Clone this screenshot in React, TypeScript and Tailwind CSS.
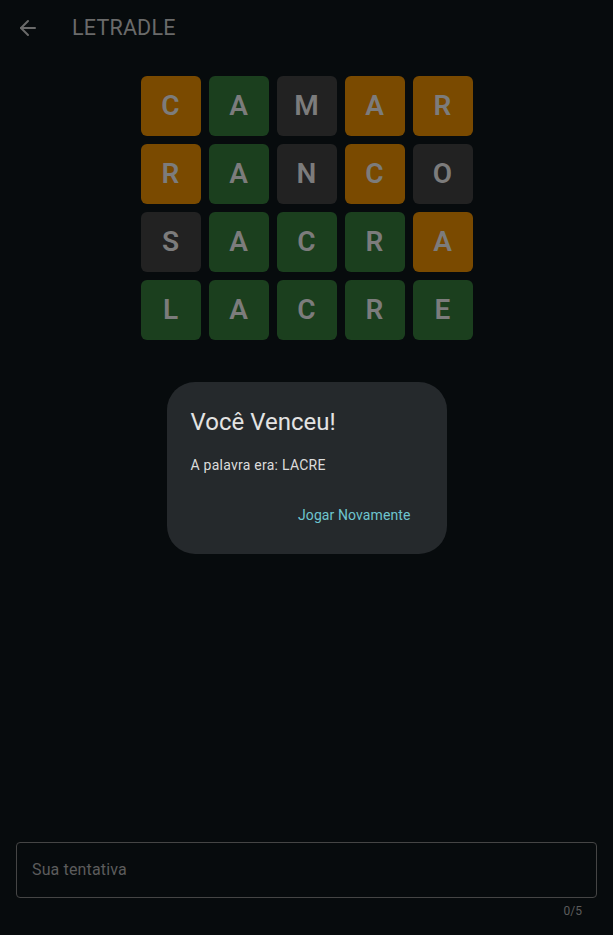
import { ArrowLeft } from 'lucide-react'

type Tile = { l: string; s: 'y' | 'g' | 'x' }

const rows: Tile[][] = [
  [{ l: 'C', s: 'y' }, { l: 'A', s: 'g' }, { l: 'M', s: 'x' }, { l: 'A', s: 'y' }, { l: 'R', s: 'y' }],
  [{ l: 'R', s: 'y' }, { l: 'A', s: 'g' }, { l: 'N', s: 'x' }, { l: 'C', s: 'y' }, { l: 'O', s: 'x' }],
  [{ l: 'S', s: 'x' }, { l: 'A', s: 'g' }, { l: 'C', s: 'g' }, { l: 'R', s: 'g' }, { l: 'A', s: 'y' }],
  [{ l: 'L', s: 'g' }, { l: 'A', s: 'g' }, { l: 'C', s: 'g' }, { l: 'R', s: 'g' }, { l: 'E', s: 'g' }],
]

const tileBg = {
  y: 'bg-[#7a4a00]',
  g: 'bg-[#1b3f1e]',
  x: 'bg-[#222222]',
}

export default function App() {
  return (
    <div className="relative h-[935px] w-full bg-[#070b0d] font-['Roboto',sans-serif] flex flex-col overflow-hidden">
      {/* app bar */}
      <div className="h-[56px] flex items-center pl-[16px] shrink-0">
        <ArrowLeft size={24} strokeWidth={2} className="text-[#6a6a6a]" />
        <span className="ml-[32px] text-[21.5px] text-[#6a6a6a] tracking-[0.2px]">LETRADLE</span>
      </div>

      {/* board */}
      <div className="mt-[20px] flex flex-col items-center gap-[8px]">
        {rows.map((row, i) => (
          <div key={i} className="flex gap-[8px]">
            {row.map((t, j) => (
              <div
                key={j}
                className={`w-[60px] h-[60px] rounded-[6px] flex items-center justify-center text-[28px] font-semibold text-[#7c7c7c] ${tileBg[t.s]}`}
              >
                {t.l}
              </div>
            ))}
          </div>
        ))}
      </div>

      <div className="flex-1" />

      {/* input */}
      <div className="px-[16px] pb-[16px]">
        <div className="h-[56px] rounded-[4px] border border-[#454545] flex items-center px-[15px]">
          <span className="text-[16px] text-[#5c5c5c] tracking-[0.15px]">Sua tentativa</span>
        </div>
        <div className="flex justify-end pr-[15px] pt-[5px] text-[12px] text-[#5c5c5c] leading-[16px]">0/5</div>
      </div>

      {/* dialog */}
      <div className="absolute inset-0 flex items-center justify-center">
        <div className="w-[280px] h-[172px] rounded-[28px] bg-[#25292c] pl-[24px] pr-[36px] pt-[24px] flex flex-col">
          <div className="text-[24px] leading-[32px] text-[#e3e3e3]">Você Venceu!</div>
          <div className="mt-[17px] text-[14px] leading-[20px] tracking-[0.25px] text-[#dcdcdc]">A palavra era: LACRE</div>
          <div className="mt-[30px] flex justify-end">
            <span className="text-[14px] leading-[20px] tracking-[0.1px] text-[#6ec5cf]">Jogar Novamente</span>
          </div>
        </div>
      </div>
    </div>
  )
}
